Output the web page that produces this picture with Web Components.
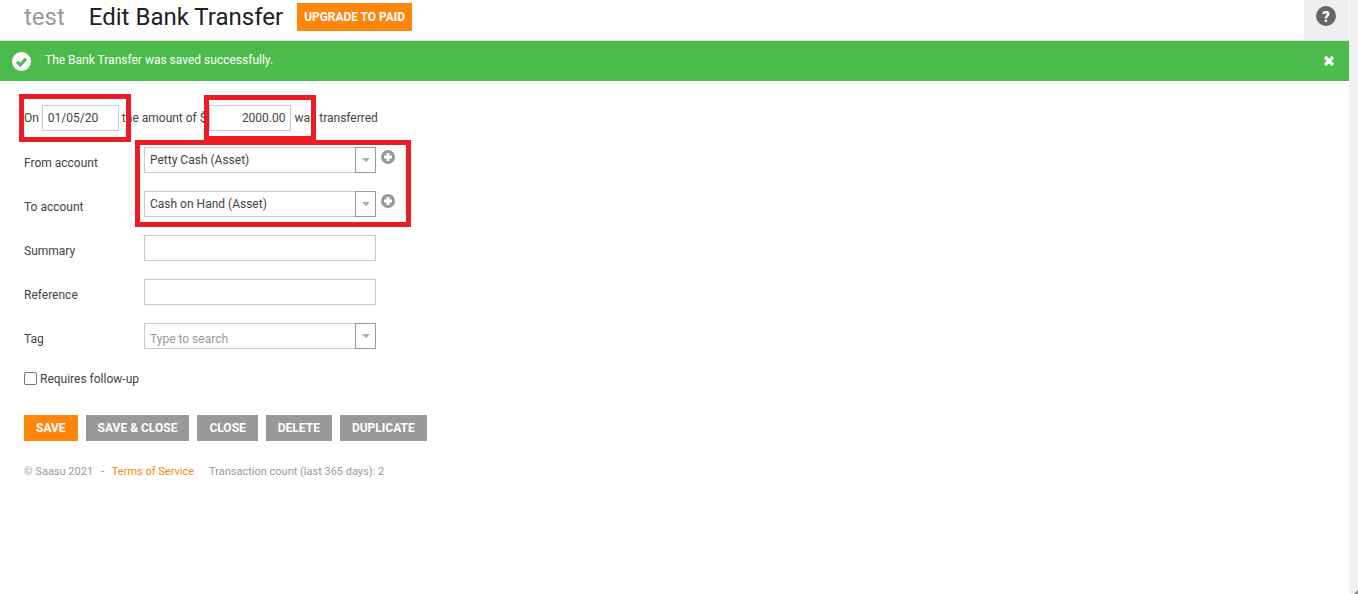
<!DOCTYPE html>
<html><head><meta charset="utf-8">
<style>
html,body{margin:0;padding:0;height:100%;overflow:hidden;background:#fff}
body{font-family:Roboto,"Liberation Sans",sans-serif;color:#444}
.page{height:594px;display:flex;flex-direction:row}
.main{flex:1;min-width:0}
</style></head><body>
<template id="t-head"><style>
:host{display:flex;height:40px;align-items:stretch;border-bottom:1px solid #e2e2e2;box-sizing:content-box}
.l{flex:1;display:flex;align-items:center;padding:0 0 6px 24px}
.org{font-size:24px;color:#999;margin-right:24px;line-height:34px}
h1{margin:0;font-weight:400;font-size:24px;color:#222;line-height:34px}
.up{margin-left:14px;background:#ff860d;color:#fff;font-weight:700;font-size:12px;height:28px;width:115px;justify-content:center;display:flex;align-items:center;letter-spacing:-.004em}
.help{width:44px;margin-right:1px;background:#eee;display:flex;align-items:flex-start;justify-content:center;padding-top:6px;box-sizing:border-box}
</style><div class="l"><span class="org">test</span><h1>Edit Bank Transfer</h1><span class="up">UPGRADE TO PAID</span></div>
<div class="help"><svg width="20" height="20" viewBox="0 0 20 20"><circle cx="10" cy="10" r="10" fill="#666"/><text x="10" y="15.5" text-anchor="middle" font-family="Roboto" font-weight="900" font-size="15" fill="#fff">?</text></svg></div></template>
<template id="t-alert"><style>
:host{display:flex;align-items:center;height:40px;background:#4bbc4b;color:#fff;font-size:12px;font-weight:400}
svg{display:block}.c{margin:0 14px 0 12px}.m{flex:1;position:relative;top:-1px}.x{margin-right:14px}
</style><svg class="c" width="19" height="19" viewBox="0 0 19 19"><circle cx="9.5" cy="9.5" r="9.5" fill="#fff"/><path d="M5 9.8l3.2 3.2L14 6.8" fill="none" stroke="#4bbc4b" stroke-width="3"/></svg><span class="m"><slot></slot></span>
<svg class="x" width="12" height="12" viewBox="0 0 12 12"><path d="M2 2l8 8M10 2l-8 8" stroke="#fff" stroke-width="3.2"/></svg></template>
<template id="t-input"><style>
:host{display:inline-flex;box-sizing:border-box;height:26px;border:1px solid #ccc;background:#fff;align-items:center;padding:0 5px;font-size:12px;color:#444;vertical-align:middle}
</style><slot></slot></template>
<template id="t-combo"><style>
:host{display:flex;box-sizing:border-box;width:232px;height:26px;border:1px solid #ccc;background:#fff;font-size:12px;color:#444;position:relative}
.v{flex:1;padding-left:5px;display:flex;align-items:center;height:24px}
:host([ph]) .v{color:#999;height:29px}
.b{width:21px;box-sizing:border-box;margin:-1px -1px -1px 0;border:1px solid #999;display:flex;align-items:center;justify-content:center}
.b i{width:0;height:0;border:4px solid transparent;border-top:4px solid #aaa;border-bottom:0;margin-top:-1px}
</style><span class="v"><slot></slot></span><span class="b"><i></i></span></template>
<template id="t-row"><style>
:host{display:flex;height:44px}
.l{width:120px;font-size:12px;color:#444;line-height:14px;padding-top:9px}
.c{display:flex;gap:5px;align-items:flex-start}
</style><div class="l"><slot name="label"></slot></div><div class="c"><slot></slot></div></template>
<template id="t-plus"><style>:host{display:block;margin-top:3px}svg{display:block}</style><svg width="14" height="14" viewBox="0 0 14 14"><circle cx="7" cy="7" r="7" fill="#999"/><path d="M7 3v8M3 7h8" stroke="#fff" stroke-width="3"/></svg></template>
<template id="t-btn"><style>
:host{display:flex;align-items:center;height:26px;padding:0 12px;background:#999;color:#fff;font-size:12px;font-weight:700}
:host([primary]){background:#ff860d}
</style><slot></slot></template>
<template id="t-mark"><style>:host{display:block;position:absolute;box-sizing:border-box;border:5px solid #ed1c24;pointer-events:none}</style></template>
<template id="t-bar"><style>
:host{display:block;width:9px;background:#f1f1f1;position:relative;height:594px}
i{position:absolute;right:0;bottom:0;width:0;height:0;border-left:4px solid transparent;border-bottom:4px solid #8a8a8a}
</style><i></i></template>

<div class="page"><div class="main">
<app-head></app-head>
<app-alert>The Bank Transfer was saved successfully.</app-alert>
<app-form></app-form>
</div><app-bar></app-bar></div>

<template id="t-form"><style>
:host{display:block;padding:24px 24px 0;font-size:12px;color:#444;position:relative}
.top{display:flex;align-items:center;height:26px;margin-bottom:16px;white-space:pre}
.chk{display:flex;align-items:center;height:14px;margin-top:5px;gap:3px}
.box{width:13px;height:13px;box-sizing:border-box;border:1px solid #777;border-radius:2px;background:#fff;margin-top:-1px}
.btns{display:flex;gap:8px;margin-top:29px}
.foot{display:flex;margin-top:24px;font-size:11px;color:#999;line-height:14px;white-space:pre}
.foot a{color:#ff860d;margin:0 15px 0 7.5px}
</style>
<div class="top"><span>On </span><app-input style="width:77px">01/05/20</app-input><span style="margin-left:3px">the amount of $</span><app-input style="width:82px;justify-content:flex-end;margin-left:2px;padding-right:4px">2000.00</app-input><span style="margin-left:4px">was transferred</span></div>
<app-row><span slot="label">From account</span><app-combo>Petty Cash (Asset)</app-combo><app-plus></app-plus></app-row>
<app-row><span slot="label">To account</span><app-combo>Cash on Hand (Asset)</app-combo><app-plus></app-plus></app-row>
<app-row><span slot="label">Summary</span><app-input style="width:232px"></app-input></app-row>
<app-row><span slot="label">Reference</span><app-input style="width:232px"></app-input></app-row>
<app-row><span slot="label">Tag</span><app-combo ph>Type to search</app-combo></app-row>
<div class="chk"><span class="box"></span><span>Requires follow-up</span></div>
<div class="btns"><app-btn primary>SAVE</app-btn><app-btn>SAVE &amp; CLOSE</app-btn><app-btn>CLOSE</app-btn><app-btn>DELETE</app-btn><app-btn>DUPLICATE</app-btn></div>
<div class="foot"><span>© Saasu 2021   -</span><a>Terms of Service</a><span>Transaction count (last 365 days): 2</span></div>
<app-mark style="left:19px;top:13px;width:112px;height:48px"></app-mark>
<app-mark style="left:204px;top:14px;width:112px;height:46px"></app-mark>
<app-mark style="left:135px;top:59px;width:276px;height:87px"></app-mark>
</template>
<script>
for(const [n,t] of [['app-head','t-head'],['app-alert','t-alert'],['app-input','t-input'],['app-combo','t-combo'],['app-row','t-row'],['app-plus','t-plus'],['app-btn','t-btn'],['app-mark','t-mark'],['app-bar','t-bar'],['app-form','t-form']]){
customElements.define(n,class extends HTMLElement{constructor(){super();this.attachShadow({mode:'open'}).appendChild(document.getElementById(t).content.cloneNode(true));}});
}
</script>
</body></html>
